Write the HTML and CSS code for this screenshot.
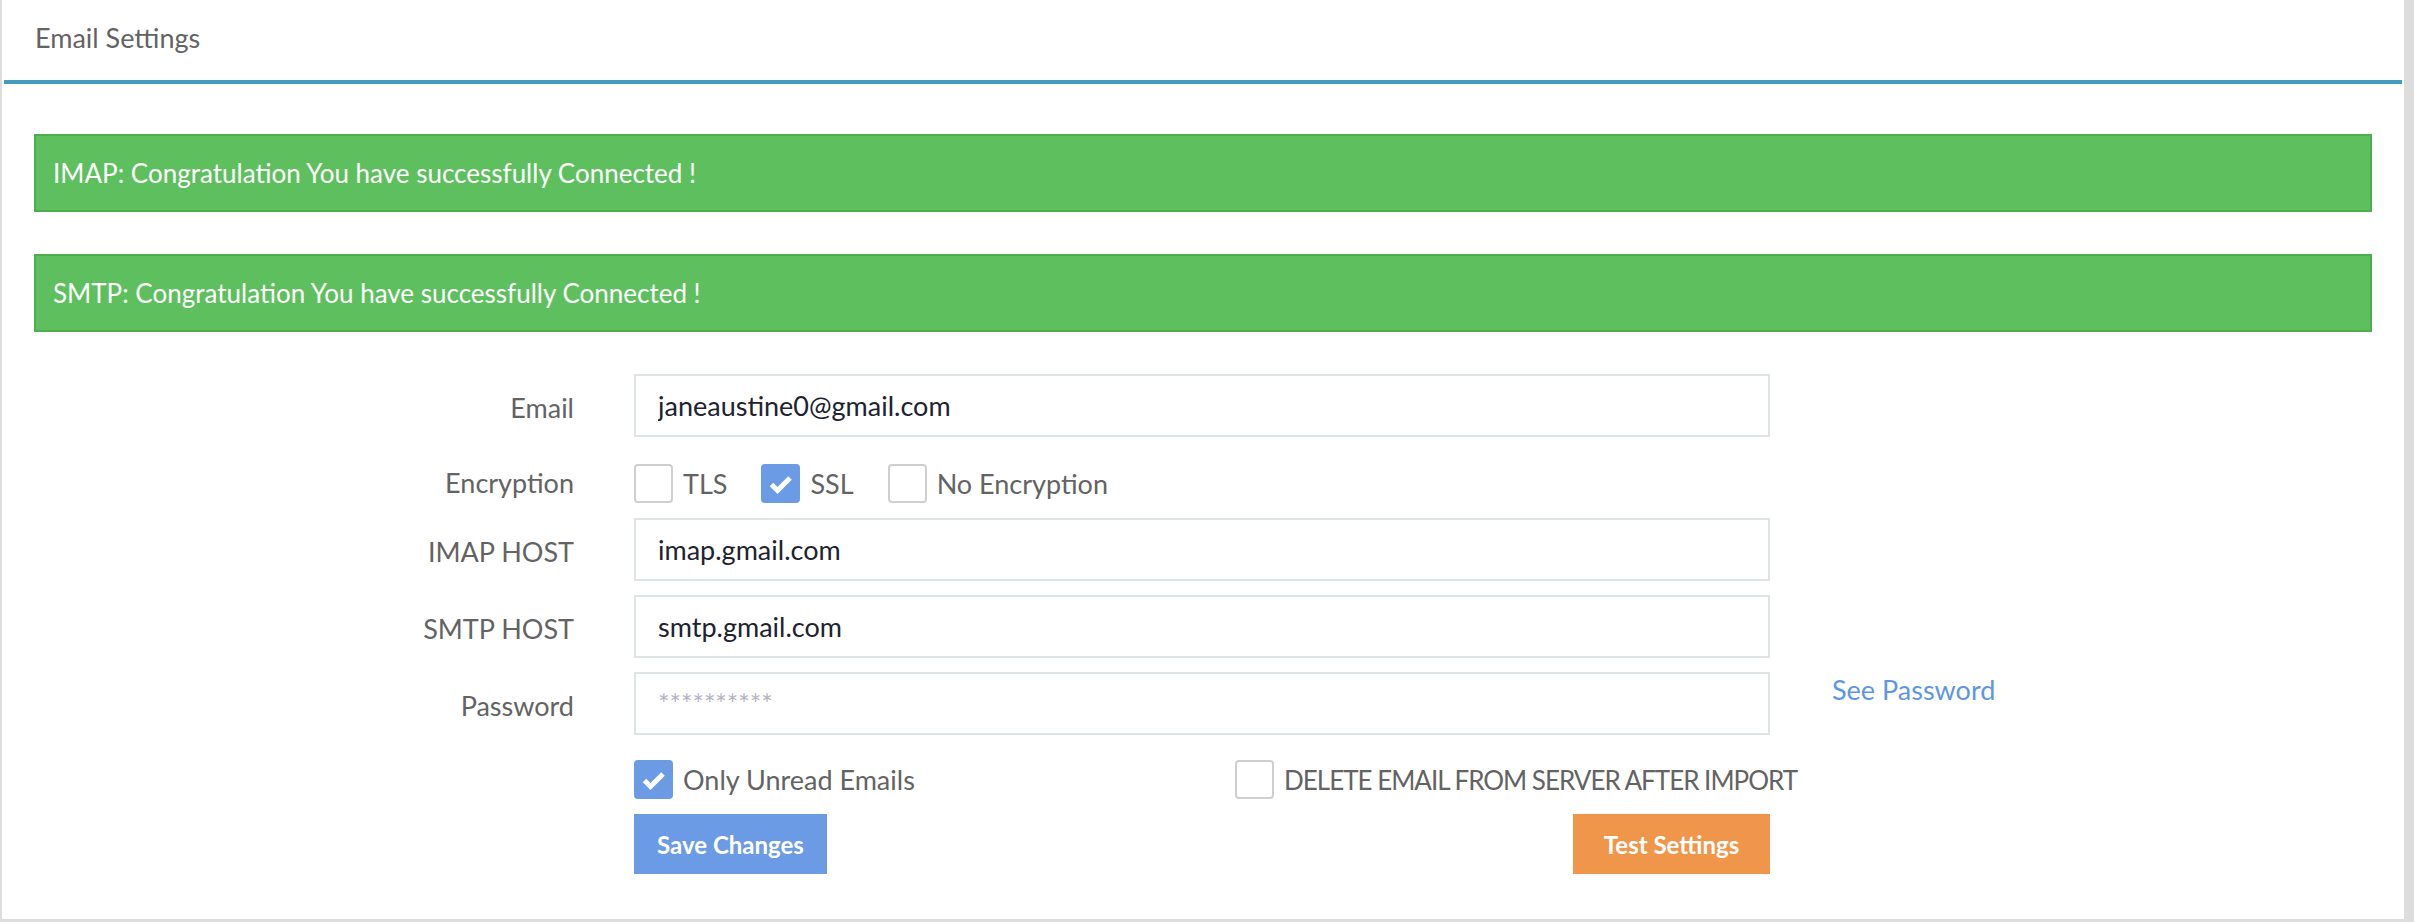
FILE: index.html
```html
<!DOCTYPE html>
<html lang="en">
<head>
<meta charset="utf-8">
<title>Email Settings</title>
<link rel="stylesheet" href="styles.css">
</head>
<body>
<div class="panel">
  <div class="panel-heading">Email Settings</div>
  <div class="panel-body">
    <div class="alert">IMAP: Congratulation You have successfully Connected !</div>
    <div class="alert">SMTP: Congratulation You have successfully Connected !</div>

    <form class="form">
      <div class="row">
        <label class="label">Email</label>
        <div class="field"><input class="input" type="text" value="janeaustine0@gmail.com"></div>
      </div>

      <div class="row row-enc">
        <label class="label">Encryption</label>
        <div class="field checks">
          <span class="check-item"><span class="cb"></span><span class="cb-text">TLS</span></span>
          <span class="check-item"><span class="cb cb-on"><svg viewBox="0 0 39 39" width="39" height="39"><path d="M10.5 20.5 L16.5 26.5 L29 14" fill="none" stroke="#fff" stroke-width="5"/></svg></span><span class="cb-text">SSL</span></span>
          <span class="check-item"><span class="cb"></span><span class="cb-text">No Encryption</span></span>
        </div>
      </div>

      <div class="row">
        <label class="label">IMAP HOST</label>
        <div class="field"><input class="input" type="text" value="imap.gmail.com"></div>
      </div>

      <div class="row">
        <label class="label">SMTP HOST</label>
        <div class="field"><input class="input" type="text" value="smtp.gmail.com"></div>
      </div>

      <div class="row">
        <label class="label">Password</label>
        <div class="field"><input class="input" type="password" placeholder="**********"></div>
        <a class="see-password" href="#">See Password</a>
      </div>

      <div class="row row-opts">
        <div class="label"></div>
        <div class="field opts">
          <span class="check-item opt-first"><span class="cb cb-on"><svg viewBox="0 0 39 39" width="39" height="39"><path d="M10.5 20.5 L16.5 26.5 L29 14" fill="none" stroke="#fff" stroke-width="5"/></svg></span><span class="cb-text">Only Unread Emails</span></span>
          <span class="check-item"><span class="cb"></span><span class="cb-text cb-caps">DELETE EMAIL FROM SERVER AFTER IMPORT</span></span>
        </div>
      </div>

      <div class="row row-btns">
        <div class="label"></div>
        <div class="field btns">
          <button type="button" class="btn btn-save">Save Changes</button>
          <button type="button" class="btn btn-test">Test Settings</button>
        </div>
      </div>
    </form>
  </div>
</div>
</body>
</html>
```

FILE: styles.css
```css
html, body {
  margin: 0;
  padding: 0;
}

body {
  background: #dddddd;
  font-family: "Lato", "Liberation Sans", sans-serif;
  font-size: 27px;
  color: #636363;
  width: 2414px;
  height: 922px;
  overflow: hidden;
}

.panel {
  margin-left: 2px;
  width: 2402px;
  height: 919px;
  background: #ffffff;
}

.panel-heading {
  height: 84px;
  box-sizing: border-box;
  margin: 0 2px;
  padding: 22px 0 0 31px;
  border-bottom: 4px solid #439bbd;
  color: #636363;
  line-height: 32px;
}

.panel-body {
  padding: 50px 32px 0 32px;
}

.alert {
  height: 78px;
  box-sizing: border-box;
  border: 2px solid #4cae4c;
  background: #5ebf5e;
  color: #ffffff;
  font-size: 26px;
  display: flex;
  align-items: center;
  padding-left: 17px;
  margin-bottom: 42px;
}

.row {
  display: flex;
  margin-bottom: 14px;
}

.label {
  flex: 0 0 600px;
  box-sizing: border-box;
  padding: 3px 60px 0 0;
  display: flex;
  align-items: center;
  justify-content: flex-end;
  color: #636363;
}

.field {
  flex: 0 0 1136px;
  width: 1136px;
}

.input {
  display: block;
  width: 100%;
  height: 63px;
  box-sizing: border-box;
  border: 2px solid #dde4e3;
  border-radius: 0;
  padding: 0 22px;
  margin: 0;
  font-family: "Lato", "Liberation Sans", sans-serif;
  font-size: 27px;
  color: #20222f;
  background: #ffffff;
  outline: none;
}

.input::placeholder {
  color: #b3b3c4;
}

.row-enc {
  height: 53px;
}

.row-enc .label {
  padding-top: 10px;
}

.checks {
  display: flex;
  align-items: center;
  padding-top: 13px;
  align-self: flex-start;
}

.check-item {
  display: inline-flex;
  align-items: center;
  margin-right: 34px;
  white-space: nowrap;
}

.cb {
  flex: 0 0 39px;
  width: 39px;
  height: 39px;
  box-sizing: border-box;
  border: 2px solid #cfcfcf;
  border-radius: 4px;
  background: #ffffff;
  position: relative;
}

.cb-on {
  background: #6a9be4;
  border-color: #6a9be4;
}

.cb-on svg {
  position: absolute;
  left: -2px;
  top: -2px;
}

.cb-text {
  margin-left: 10px;
  color: #636363;
}

.cb-caps {
  font-size: 26px;
  letter-spacing: -1px;
}

.see-password {
  margin-left: 62px;
  color: #5e96e6;
  text-decoration: none;
  line-height: 32px;
  padding-top: 2px;
  align-self: flex-start;
}

.row-opts {
  margin-top: 25px;
  margin-bottom: 15px;
}

.opts {
  display: flex;
  align-items: center;
  height: 39px;
}

.opt-first {
  flex: 0 0 601px;
  margin-right: 0;
}

.btns {
  display: flex;
  justify-content: space-between;
}

.btn {
  height: 60px;
  border: none;
  border-radius: 0;
  color: #ffffff;
  font-family: "Lato", "Liberation Sans", sans-serif;
  font-size: 24px;
  font-weight: 700;
  padding: 0;
  margin: 0;
}

.btn-save {
  width: 193px;
  background: #6a9be4;
}

.btn-test {
  width: 197px;
  background: #f0964a;
}
```
